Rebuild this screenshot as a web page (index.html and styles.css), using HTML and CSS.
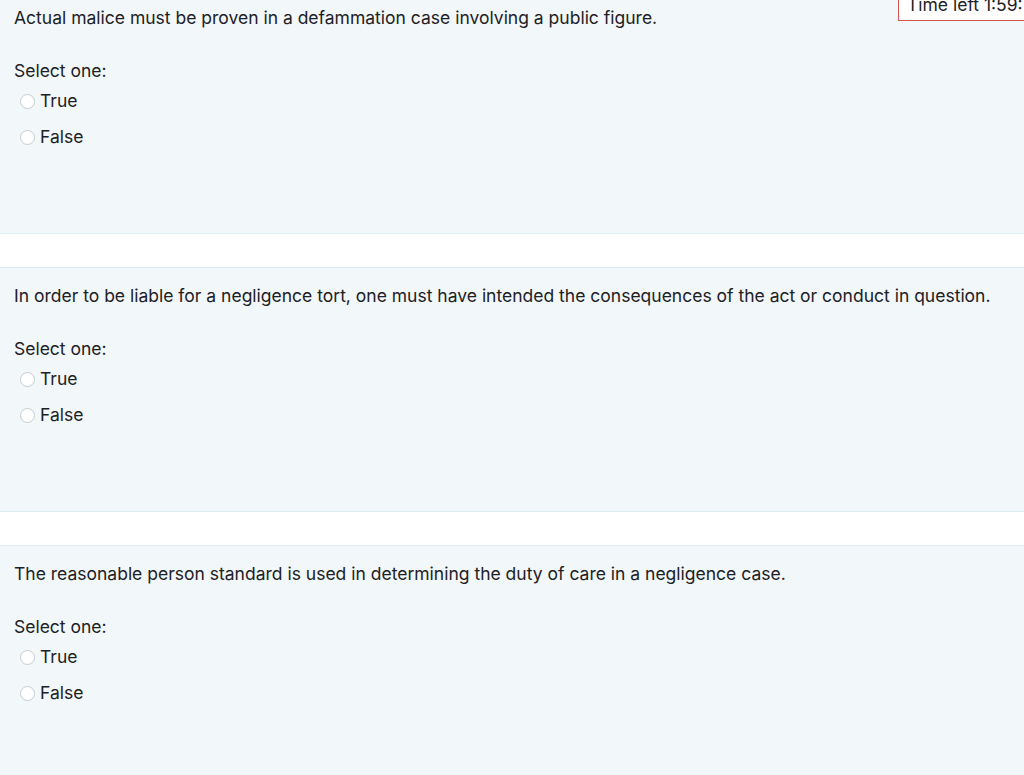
FILE: index.html
```html
<!DOCTYPE html>
<html>
<head>
<meta charset="utf-8">
<link rel="stylesheet" href="styles.css">
</head>
<body>
<div class="page">
  <div class="que">
    <div class="qtext">Actual malice must be proven in a defammation case involving a public figure.</div>
    <div class="prompt">Select one:</div>
    <div class="answers">
      <label class="opt"><span class="radio"></span><span>True</span></label>
      <label class="opt"><span class="radio"></span><span>False</span></label>
    </div>
  </div>
  <div class="gap"></div>
  <div class="que">
    <div class="qtext">In order to be liable for a negligence tort, one must have intended the consequences of the act or conduct in question.</div>
    <div class="prompt">Select one:</div>
    <div class="answers">
      <label class="opt"><span class="radio"></span><span>True</span></label>
      <label class="opt"><span class="radio"></span><span>False</span></label>
    </div>
  </div>
  <div class="gap"></div>
  <div class="que">
    <div class="qtext">The reasonable person standard is used in determining the duty of care in a negligence case.</div>
    <div class="prompt">Select one:</div>
    <div class="answers">
      <label class="opt"><span class="radio"></span><span>True</span></label>
      <label class="opt"><span class="radio"></span><span>False</span></label>
    </div>
  </div>
</div>
<div class="timer">Time left 1:59:</div>
</body>
</html>
```
FILE: styles.css
```css
html, body {
  margin: 0;
  padding: 0;
  background: #fff;
  overflow: hidden;
}
body {
  font-family: Inter, "Noto Sans", sans-serif;
  font-size: 17.5px;
  color: #1d2125;
}
.page {
  margin-top: -11px;
}
.que {
  background: #f2f7fa;
  border-top: 1px solid #dcedf3;
  border-bottom: 1px solid #dcedf3;
  height: 227px;
  padding: 16px 14px 0;
  box-sizing: content-box;
}
.gap {
  height: 33px;
}
.qtext {
  line-height: 24px;
}
.prompt {
  margin-top: 29px;
  line-height: 24px;
}
.answers {
  display: flex;
  flex-direction: column;
  gap: 12px;
  margin-top: 6px;
  padding-left: 6px;
}
.opt {
  display: flex;
  align-items: center;
  gap: 5px;
  line-height: 24px;
}
.radio {
  width: 15px;
  height: 15px;
  border-radius: 50%;
  border: 1px solid #c8ccd0;
  background: #fff;
  box-sizing: border-box;
}
.timer {
  position: absolute;
  top: -11px;
  left: 898px;
  width: 140px;
  padding: 4px 8px 4px 8px;
  background: #fff;
  border: 1px solid #d9534f;
  font-size: 17.5px;
  line-height: 22px;
  white-space: nowrap;
  overflow: hidden;
  color: #1d2125;
}
```
